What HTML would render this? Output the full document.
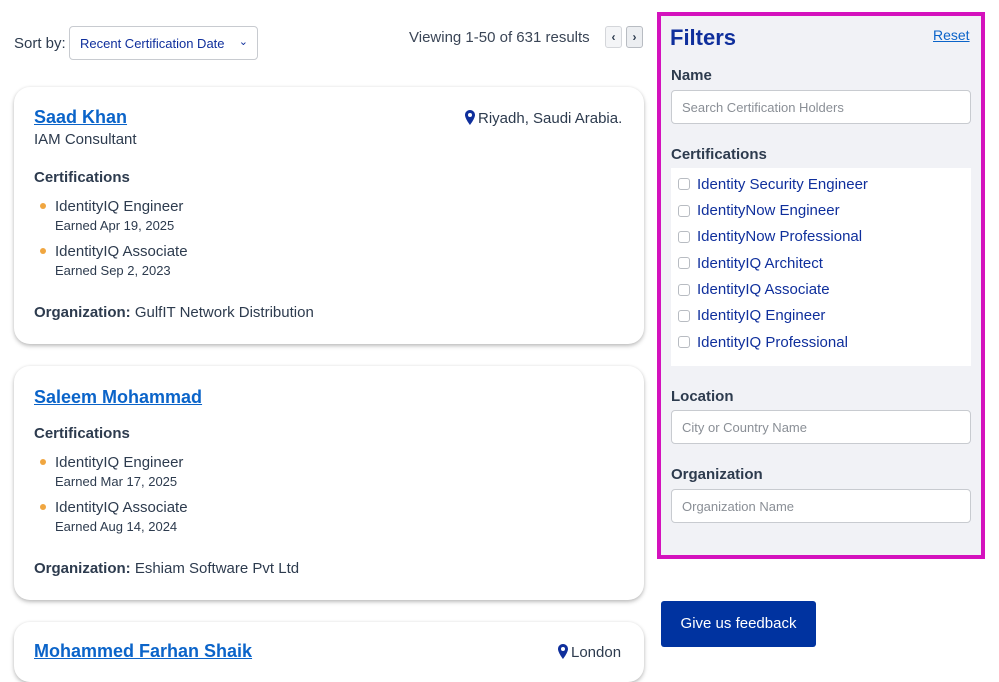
<!DOCTYPE html>
<html><head><meta charset="utf-8"><style>
*{box-sizing:border-box;margin:0;padding:0}
body{width:999px;height:656px;overflow:hidden;background:#fff;font-family:"Liberation Sans",sans-serif;color:#2d3b4e;position:relative}
.a{position:absolute;white-space:nowrap}
.card{position:absolute;left:14px;width:630px;background:#fff;border-radius:16px;box-shadow:0 2px 4px rgba(0,0,0,.25),0 0 3px rgba(0,0,0,.06)}
.name{color:#0b64c9;font-weight:bold;font-size:18px;text-decoration:underline}
.h{font-weight:bold;font-size:15px;color:#2d3b4e}
.cert{font-size:15px}
.earn{font-size:13px}
.dot{width:6px;height:6px;border-radius:50%;background:#f0a640}
.pin{display:inline-block;vertical-align:-2px;margin-right:3px}
.inp{position:absolute;left:671px;width:300px;height:34px;border:1px solid #c8cbd0;border-radius:4px;background:#fff;font-size:13px;color:#8a8f96;padding:9px 10px}
.lbl{font-weight:bold;font-size:15px;color:#2d3b4e}
.cb{position:absolute;left:678px;width:12px;height:12px;border:1px solid #b8bcc2;border-radius:3px;background:#fff}
.ct{color:#0f2f9c;font-size:15px}
</style></head><body>
<div class="a" style="left:14px;top:35px;font-size:15px">Sort by:</div>
<div class="a" style="left:69px;top:26px;width:189px;height:34px;border:1px solid #c8cbd0;border-radius:4px;font-size:13px;color:#0f2f9c;padding:9px 10px">Recent Certification Date<span style="position:absolute;right:9px;top:8px;font-size:11px">&#8964;</span></div>
<div class="a" style="left:409px;top:29px;font-size:15px;color:#3a4556">Viewing 1-50 of 631 results</div>
<div class="a" style="left:605px;top:26px;width:17px;height:22px;border:1px solid #d4d6da;border-radius:3px;background:#f4f5f7;font-size:12px;text-align:center;line-height:20px;font-weight:bold">&#8249;</div>
<div class="a" style="left:626px;top:26px;width:17px;height:22px;border:1px solid #b8bcc2;border-radius:3px;background:#eceef1;font-size:12px;text-align:center;line-height:20px;font-weight:bold">&#8250;</div>

<div class="card" style="top:87px;height:257px"></div>
<div class="a name" style="left:34px;top:107px">Saad Khan</div>
<div class="a" style="left:465px;top:110px;font-size:15px"><svg class="pin" width="10" height="15" viewBox="0 0 10 15"><path d="M5 0C2.2 0 0 2.2 0 5c0 3.5 5 10 5 10s5-6.5 5-10C10 2.2 7.8 0 5 0zm0 7a2 2 0 110-4 2 2 0 010 4z" fill="#0f2f9c"/></svg>Riyadh, Saudi Arabia.</div>
<div class="a" style="left:34px;top:131px;font-size:15px">IAM Consultant</div>
<div class="a h" style="left:34px;top:169px">Certifications</div>
<div class="a dot" style="left:40px;top:203px"></div>
<div class="a cert" style="left:55px;top:198px">IdentityIQ Engineer</div>
<div class="a earn" style="left:55px;top:218px">Earned Apr 19, 2025</div>
<div class="a dot" style="left:40px;top:248px"></div>
<div class="a cert" style="left:55px;top:243px">IdentityIQ Associate</div>
<div class="a earn" style="left:55px;top:263px">Earned Sep 2, 2023</div>
<div class="a" style="left:34px;top:304px;font-size:15px"><b>Organization:</b> GulfIT Network Distribution</div>

<div class="card" style="top:366px;height:234px"></div>
<div class="a name" style="left:34px;top:387px">Saleem Mohammad</div>
<div class="a h" style="left:34px;top:425px">Certifications</div>
<div class="a dot" style="left:40px;top:459px"></div>
<div class="a cert" style="left:55px;top:454px">IdentityIQ Engineer</div>
<div class="a earn" style="left:55px;top:474px">Earned Mar 17, 2025</div>
<div class="a dot" style="left:40px;top:504px"></div>
<div class="a cert" style="left:55px;top:499px">IdentityIQ Associate</div>
<div class="a earn" style="left:55px;top:519px">Earned Aug 14, 2024</div>
<div class="a" style="left:34px;top:560px;font-size:15px"><b>Organization:</b> Eshiam Software Pvt Ltd</div>

<div class="card" style="top:622px;height:60px"></div>
<div class="a name" style="left:34px;top:641px">Mohammed Farhan Shaik</div>
<div class="a" style="left:558px;top:644px;font-size:15px"><svg class="pin" width="10" height="15" viewBox="0 0 10 15"><path d="M5 0C2.2 0 0 2.2 0 5c0 3.5 5 10 5 10s5-6.5 5-10C10 2.2 7.8 0 5 0zm0 7a2 2 0 110-4 2 2 0 010 4z" fill="#0f2f9c"/></svg>London</div>

<div class="a" style="left:657px;top:12px;width:328px;height:547px;border:4px solid #d412bd;background:#f1f2f6"></div>
<div class="a" style="left:670px;top:25px;font-size:22px;font-weight:bold;color:#0f2f9c">Filters</div>
<div class="a" style="left:933px;top:27px;font-size:14px;color:#0b64c9;text-decoration:underline">Reset</div>
<div class="a lbl" style="left:671px;top:67px">Name</div>
<div class="inp" style="top:90px">Search Certification Holders</div>
<div class="a lbl" style="left:671px;top:146px">Certifications</div>
<div class="a" style="left:671px;top:168px;width:300px;height:198px;background:#fff"></div>
<div class="cb" style="top:178px"></div><div class="a ct" style="left:697px;top:176px">Identity Security Engineer</div>
<div class="cb" style="top:205px"></div><div class="a ct" style="left:697px;top:202px">IdentityNow Engineer</div>
<div class="cb" style="top:231px"></div><div class="a ct" style="left:697px;top:228px">IdentityNow Professional</div>
<div class="cb" style="top:257px"></div><div class="a ct" style="left:697px;top:255px">IdentityIQ Architect</div>
<div class="cb" style="top:284px"></div><div class="a ct" style="left:697px;top:281px">IdentityIQ Associate</div>
<div class="cb" style="top:310px"></div><div class="a ct" style="left:697px;top:307px">IdentityIQ Engineer</div>
<div class="cb" style="top:336px"></div><div class="a ct" style="left:697px;top:334px">IdentityIQ Professional</div>
<div class="a lbl" style="left:671px;top:388px">Location</div>
<div class="inp" style="top:410px">City or Country Name</div>
<div class="a lbl" style="left:671px;top:466px">Organization</div>
<div class="inp" style="top:489px">Organization Name</div>

<div class="a" style="left:661px;top:601px;width:155px;height:46px;background:#0033a0;border-radius:3px;color:#fff;font-size:15px;text-align:center;line-height:46px">Give us feedback</div>
</body></html>
